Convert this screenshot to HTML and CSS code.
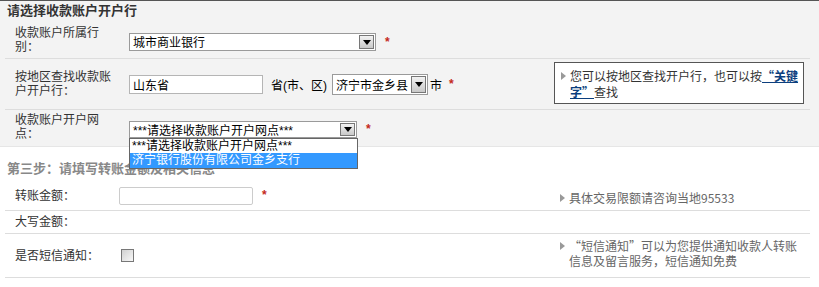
FILE: index.html
```html
<!DOCTYPE html>
<html lang="zh-CN">
<head>
  <meta charset="UTF-8" />
  <title>收款账户开户行</title>
  <link rel="stylesheet" href="styles.css">
</head>
<body>

  <div class="step step-bank">
    <h3 class="step-title">请选择收款账户开户行</h3>

    <div class="row row-type">
      <div class="label">收款账户所属行别：</div>
      <div class="field">
        <span class="select select-type">城市商业银行<span class="select-btn"></span></span>
        <span class="req">*</span>
      </div>
    </div>

    <div class="row row-area">
      <div class="label">按地区查找收款账户开户行：</div>
      <div class="field">
        <span class="input input-prov">山东省</span>
        <span class="unit">省(市、区)</span>
        <span class="select select-city">济宁市金乡县<span class="select-btn"></span></span>
        <span class="unit unit-city">市</span>
        <span class="req">*</span>
      </div>
      <div class="tip tip-box">
        <span class="tip-arrow"></span>
        <p>您可以按地区查找开户行，也可以按<a href="#">“关键字”</a>查找</p>
      </div>
    </div>

    <div class="row row-branch">
      <div class="label">收款账户开户网点：</div>
      <div class="field">
        <span class="select select-branch">***请选择收款账户开户网点***<span class="select-btn"></span>
          <ul class="options">
            <li>***请选择收款账户开户网点***</li>
            <li class="active">济宁银行股份有限公司金乡支行</li>
          </ul>
        </span>
        <span class="req">*</span>
      </div>
    </div>
  </div>

  <div class="step step-amount">
    <h3 class="step-title">第三步：请填写转账金额及相关信息</h3>

    <div class="row row-money">
      <div class="label">转账金额：</div>
      <div class="field">
        <span class="input input-money"></span>
        <span class="req">*</span>
      </div>
      <div class="tip">
        <span class="tip-arrow"></span>
        <p>具体交易限额请咨询当地95533</p>
      </div>
    </div>

    <div class="row row-upper">
      <div class="label">大写金额：</div>
    </div>

    <div class="row row-sms">
      <div class="label">是否短信通知：</div>
      <div class="field">
        <span class="checkbox"></span>
      </div>
      <div class="tip">
        <span class="tip-arrow"></span>
        <p>“短信通知”可以为您提供通知收款人转账信息及留言服务，短信通知免费</p>
      </div>
    </div>
  </div>

</body>
</html>
```

FILE: styles.css
```css
* {
  margin: 0;
  padding: 0;
  box-sizing: border-box;
}

body {
  width: 819px;
  height: 287px;
  overflow: hidden;
  background: #fff;
  color: #333;
  font-family: "Liberation Sans", "Noto Sans CJK SC", sans-serif;
  font-size: 12px;
}

.step-bank {
  background: #f3f3f3;
  border-top: 1px solid #555;
}

.step-title {
  padding-left: 7px;
  font-size: 13px;
  font-weight: bold;
  line-height: 19px;
  color: #333;
}

.step-amount .step-title {
  padding-top: 12px;
  line-height: 20px;
  height: 33px;
  color: #888;
}

.row {
  display: flex;
  align-items: center;
  margin: 0 9px 0 5px;
  padding-left: 10px;
  border-bottom: 1px solid #ddd;
}

.row-type { height: 39px; }
.row-area { height: 51px; }
.row-branch { height: 37px; margin: 0; padding-left: 15px; border-bottom-color: #e6e6e6; }
.row-money { height: 31px; }
.row-upper { height: 23px; }
.row-sms { height: 44px; }

.label {
  width: 100px;
  margin-right: 14px;
  line-height: 14px;
}

.step-amount .label {
  width: 104px;
  margin-right: 0;
}

.row-type .label { padding-top: 1px; }
.row-branch .label { margin-top: -3px; }
.row-money .label { padding-top: 2px; }

.field {
  display: flex;
  align-items: center;
}

.row-type .field { margin-top: 5px; }
.row-branch .field { margin-top: 2px; }

.select,
.input {
  position: relative;
  display: flex;
  align-items: center;
  background: #fff;
  color: #000;
  border: 1px solid #9a9a9a;
  padding-left: 3px;
  white-space: nowrap;
}

.select-type { width: 247px; height: 18px; }
.select-city { width: 96px; height: 21px; }
.select-branch { width: 228px; height: 17px; }

.select-btn {
  position: absolute;
  top: 1px;
  right: 1px;
  bottom: 1px;
  width: 15px;
  border: 1px solid #777;
  background: linear-gradient(#f2f2f2, #c8c8c8);
}

.select-btn::after {
  content: "";
  position: absolute;
  left: 3px;
  top: 50%;
  margin-top: -2px;
  border-left: 4px solid transparent;
  border-right: 4px solid transparent;
  border-top: 5px solid #000;
}

.input-prov {
  width: 134px;
  height: 19px;
  border-color: #b5b5b5;
}

.input-money {
  width: 134px;
  height: 18px;
  margin-top: 1px;
  border-color: #ccc;
  border-radius: 2px;
}

.unit {
  margin: 0 5px 0 8px;
  color: #000;
}

.unit-city {
  margin: 0 0 0 2px;
}

.req {
  margin-left: 9px;
  color: #c4271e;
  font-weight: bold;
  font-size: 12px;
}

.row-area .req { margin-left: 7px; }

.options {
  position: absolute;
  top: 16px;
  left: -1px;
  width: 229px;
  list-style: none;
  background: #fff;
  border: 1px solid #666;
  z-index: 5;
}

.options li {
  height: 14px;
  line-height: 14px;
  padding-left: 2px;
  color: #000;
}

.options li.active {
  height: 15px;
  background: #3399ff;
  color: #fff;
}

.tip {
  display: flex;
  align-items: flex-start;
  width: 241px;
  margin-left: auto;
  margin-right: 9px;
  color: #666;
  line-height: 15px;
  font-family: "Noto Sans CJK SC", "Liberation Sans", sans-serif;
}

.tip p {
  flex: 1;
}

.tip-arrow {
  flex: none;
  width: 0;
  height: 0;
  margin: 4px 4px 0 0;
  border-left: 5px solid #999;
  border-top: 4px solid transparent;
  border-bottom: 4px solid transparent;
}

.row-money .tip { margin-top: 5px; }
.row-sms .tip { margin-top: -5px; }

.tip-box {
  width: 250px;
  height: 42px;
  margin-right: 6px;
  margin-top: -2px;
  padding: 5px 2px 0 6px;
  background: #fff;
  border: 1px solid #555;
  color: #333;
  line-height: 16px;
}

.tip-box a {
  color: #0c3f7e;
  font-weight: bold;
  text-decoration: underline;
}

.checkbox {
  display: block;
  width: 13px;
  height: 13px;
  margin-left: 2px;
  border: 1px solid #777;
  background: linear-gradient(135deg, #d0d0d0, #f8f8f8);
}
```
